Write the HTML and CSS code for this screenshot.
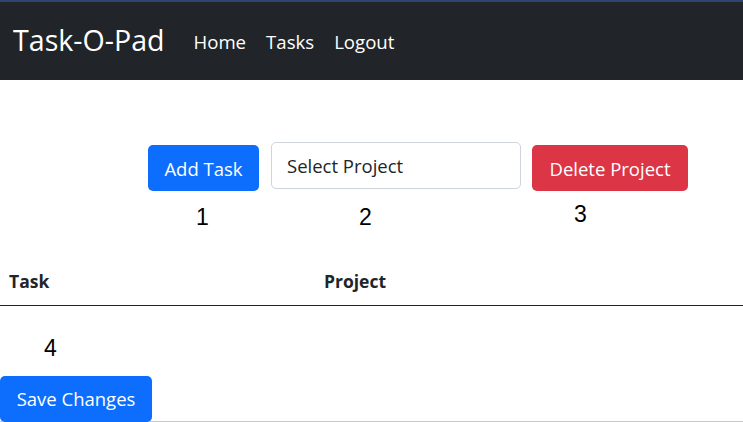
FILE: index.html
```html
<!DOCTYPE html>
<html lang="en">
<head>
<meta charset="utf-8">
<title>Task-O-Pad</title>
<link rel="stylesheet" href="styles.css">
</head>
<body>
<nav class="navbar">
  <a class="brand" href="#">Task-O-Pad</a>
  <ul class="nav-links">
    <li><a href="#">Home</a></li>
    <li><a href="#">Tasks</a></li>
    <li><a href="#">Logout</a></li>
  </ul>
</nav>
<main class="page">
  <div class="controls">
    <button class="btn btn-primary btn-add">Add Task</button>
    <div class="select">Select Project</div>
    <button class="btn btn-danger btn-delete">Delete Project</button>
  </div>
  <div class="labels">
    <span class="label label-1">1</span>
    <span class="label label-2">2</span>
    <span class="label label-3">3</span>
  </div>
  <table class="tasks">
    <thead>
      <tr><th class="col-task">Task</th><th class="col-project">Project</th></tr>
    </thead>
  </table>
  <div class="label label-4">4</div>
  <div class="footer">
    <button class="btn btn-primary btn-save">Save Changes</button>
  </div>
</main>
</body>
</html>
```
FILE: styles.css
```css
* { box-sizing: border-box; }
html, body { margin: 0; padding: 0; background: #fff; }
body {
  font-family: "Open Sans", "Noto Sans", sans-serif;
  color: #212529;
  overflow: hidden;
}
.navbar {
  height: 80px;
  background: #212529;
  border-top: 2px solid #2c4672;
  display: flex;
  align-items: center;
  padding-left: 13px;
}
.brand {
  color: #fff;
  text-decoration: none;
  font-size: 28.6px;
  line-height: 1;
  margin-right: 29px;
  margin-top: -1px;
}
.nav-links {
  list-style: none;
  display: flex;
  gap: 20px;
  margin: 0;
  padding: 0;
}
.nav-links a {
  color: #fff;
  text-decoration: none;
  font-size: 18.6px;
}
.controls {
  display: flex;
  align-items: flex-start;
  gap: 12px;
  padding-left: 148px;
  margin-top: 62px;
}
.btn {
  font-family: "Open Sans", "Noto Sans", sans-serif;
  font-size: 18.5px;
  color: #fff;
  border: none;
  border-radius: 5px;
  height: 46px;
  padding: 0 16px;
  cursor: pointer;
}
.btn-primary { background: #0d6efd; }
.btn-danger { background: #dc3545; }
.btn-add { width: 111px; margin-top: 3px; }
.btn-delete { width: 156px; margin-top: 3px; margin-left: -1px; }
.select {
  width: 250px;
  height: 47px;
  border: 1px solid #ced4da;
  border-radius: 5px;
  padding-left: 15px;
  display: flex;
  align-items: center;
  font-size: 18.5px;
  color: #212529;
}
.label {
  font-family: "Liberation Sans", Arial, sans-serif;
  font-size: 23px;
  line-height: 24px;
  color: #000;
}
.labels {
  position: relative;
  height: 24px;
  margin-top: 14px;
}
.labels .label { position: absolute; top: 0; }
.label-1 { left: 196px; }
.label-2 { left: 359px; }
.label-3 { left: 574px; top: -3px !important; }
.tasks {
  width: 100%;
  border-collapse: collapse;
  margin-top: 29px;
}
.tasks th {
  text-align: left;
  font-weight: 700;
  font-size: 17.5px;
  height: 47px;
  padding: 0 9px;
  border-bottom: 1px solid #212529;
}
.col-task { width: 315px; }
.label-4 {
  padding-left: 44px;
  margin-top: 30px;
}
.footer {
  margin-top: 16px;
  border-bottom: 1px solid #c8c8c8;
  height: 46px;
}
.btn-save {
  width: 152px;
  height: 46px;
  padding: 0 14px;
}
```
